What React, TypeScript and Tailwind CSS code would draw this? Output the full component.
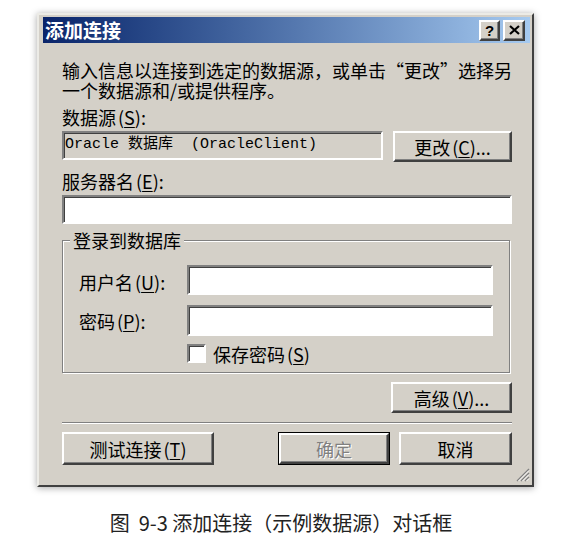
import type { ReactNode } from "react"

const raised =
  "bg-[#d4d0c8] border-2 border-t-white border-l-white border-b-[#404040] border-r-[#404040] shadow-[inset_-1px_-1px_0_#808080]"
const sunken =
  "border-2 border-t-[#808080] border-l-[#808080] border-b-white border-r-white shadow-[inset_1px_1px_0_#404040]"

function Key({ k }: { k: string }) {
  return (
    <>
      <span className="ml-[2px]">(</span>
      <span className="underline underline-offset-2">{k}</span>)
    </>
  )
}

function Button({ children, className = "" }: { children: ReactNode; className?: string }) {
  return (
    <div className={`${raised} flex items-center justify-center text-[18px] leading-[18px] ${className}`}>
      {children}
    </div>
  )
}

export default function App() {
  return (
    <div className="w-[576px] min-h-[537px] bg-white pt-[13px] font-['Noto_Sans_CJK_SC',sans-serif] text-black">
      {/* window */}
      <div className="relative ml-[37px] w-[497px] h-[474px] bg-[#d4d0c8] border-2 border-t-[#ecebe6] border-l-[#ecebe6] border-b-[#404040] border-r-[#404040] shadow-[0_1px_7px_rgba(0,0,0,0.35)] pt-[2px] pl-[4px] pr-[2px]">
        {/* title bar */}
        <div className="h-[26px] flex items-center justify-between pl-[2px] pr-[5px] bg-gradient-to-r from-[#0a246a] to-[#a6caf0]">
          <span className="text-white font-bold text-[19px] leading-[26px]">添加连接</span>
          <div className="flex gap-[3px]">
            <div className={`${raised} w-[21px] h-[21px] flex items-center justify-center text-[15px] font-bold leading-none font-['Liberation_Sans',sans-serif]`}>
              ?
            </div>
            <div className={`${raised} w-[22px] h-[21px] flex items-center justify-center`}>
              <svg width="11" height="10" viewBox="0 0 11 10">
                <path d="M1 1 L10 9 M10 1 L1 9" stroke="#000" strokeWidth="2.2" />
              </svg>
            </div>
          </div>
        </div>

        {/* body */}
        <div className="ml-[19px] w-[450px] flex flex-col">
          <p className="mt-[17px] text-[18px] leading-[20px] whitespace-nowrap">
            输入信息以连接到选定的数据源，或单击“更改”选择另
            <br />
            一个数据源和/或提供程序。
          </p>

          <div className="mt-[8px] text-[18px] leading-[18px]">
            数据源<Key k="S" />:
          </div>
          <div className="mt-[5px] flex items-start justify-between">
            <div className={`${sunken} w-[321px] h-[29px] flex items-center pl-[1px] text-[15px] whitespace-pre font-['Liberation_Mono','Noto_Sans_CJK_SC',monospace]`}>
              Oracle 数据库  (OracleClient)
            </div>
            <Button className="w-[119px] h-[31px]">
              更改<Key k="C" />...
            </Button>
          </div>

          <div className="mt-[10px] text-[18px] leading-[18px]">
            服务器名<Key k="E" />:
          </div>
          <div className={`${sunken} mt-[5px] h-[29px] bg-white`} />

          <fieldset className="mt-[7px] w-[448px] border border-[#808080] shadow-[1px_1px_0_#fff,inset_1px_1px_0_#fff] pl-[16px] pr-[15px] pb-[9px]">
            <legend className="ml-[-9px] px-[3px] bg-[#d4d0c8] text-[18px] leading-[18px]">登录到数据库</legend>
            <div className="mt-[16px] flex items-center">
              <span className="w-[108px] text-[18px] leading-[18px] pt-[3px]">
                用户名<Key k="U" />:
              </span>
              <div className={`${sunken} w-[306px] h-[30px] bg-white`} />
            </div>
            <div className="mt-[10px] flex items-center">
              <span className="w-[108px] text-[18px] leading-[18px]">
                密码<Key k="P" />:
              </span>
              <div className={`${sunken} w-[306px] h-[31px] bg-white`} />
            </div>
            <div className="mt-[8px] flex items-center pl-[108px]">
              <div className={`${sunken} w-[19px] h-[19px] bg-white`} />
              <span className="ml-[7px] text-[18px] leading-[18px]">
                保存密码<Key k="S" />
              </span>
            </div>
          </fieldset>

          <Button className="mt-[9px] self-end w-[121px] h-[31px]">
            高级<Key k="V" />...
          </Button>

          <div className="mt-[9px] h-0 border-t border-t-[#808080] border-b border-b-white" />

          <div className="mt-[8px] flex justify-between">
            <Button className="w-[152px] h-[33px]">
              测试连接<Key k="T" />
            </Button>
            <div className="flex gap-[9px]">
              <div className="border border-black">
                <Button className="w-[110px] h-[31px] text-[#808080] [text-shadow:1px_1px_0_#fff]">确定</Button>
              </div>
              <Button className="w-[113px] h-[33px]">取消</Button>
            </div>
          </div>
        </div>

        {/* resize grip */}
        <svg className="absolute right-[2px] bottom-[3px]" width="16" height="16" viewBox="0 0 16 16">
          <path d="M15 3 L3 15 M15 7 L7 15 M15 11 L11 15" stroke="#808080" strokeWidth="1.4" />
          <path d="M15 4.5 L4.5 15 M15 8.5 L8.5 15 M15 12.5 L12.5 15" stroke="#ffffff" strokeWidth="1" />
        </svg>
      </div>

      <div className="mt-[22px] pr-[14px] text-center text-[20px] leading-[28px] text-[#222]">
        图&nbsp; 9-3 添加连接（示例数据源）对话框
      </div>
    </div>
  )
}
